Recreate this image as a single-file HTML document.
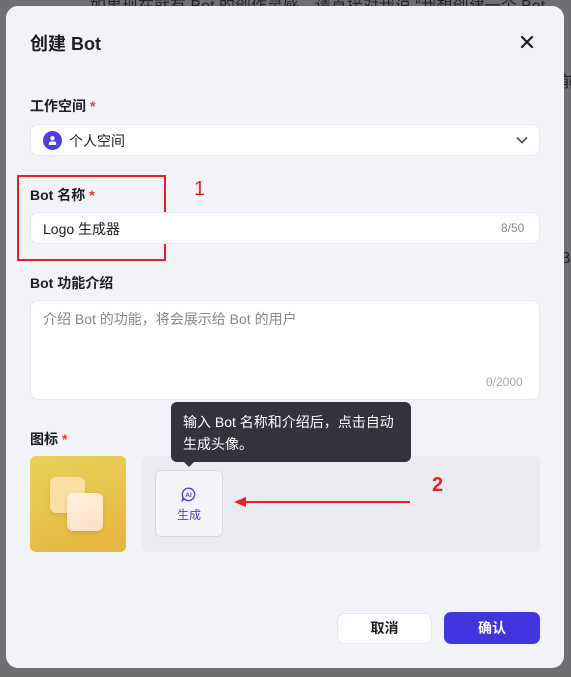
<!DOCTYPE html>
<html><head><meta charset="utf-8"><style>
*{box-sizing:border-box;margin:0;padding:0}
body{width:571px;height:677px;overflow:hidden;background:#6f6f72;font-family:"Liberation Sans","Noto Sans CJK SC",sans-serif;position:relative;color:#1d1c23}
.abs{position:absolute}
.modal{position:absolute;left:6px;top:6px;width:558px;height:662px;background:#f1f3f8;border-radius:12px}
.lbl{position:absolute;font-size:14px;font-weight:bold;color:#1d1c23}
.lbl i{color:#f02e2e;font-style:normal;margin-left:4px}
.inp{position:absolute;left:30px;width:510px;background:#fff;border:1px solid #e6e7ec;border-radius:8px}
</style></head><body>
<div class="abs" style="left:90px;top:-8px;font-size:16px;color:#222">如果现在就有 Bot 的创作灵感，请直接对我说 “我想创建一个 Bot</div>
<div class="abs" style="left:560px;top:68px;font-size:16px;color:#222">前</div>
<div class="abs" style="left:560px;top:250px;font-size:16px;color:#222">Bo</div>
<div class="modal"></div>
<div class="abs" style="left:30px;top:30px;font-size:18px;font-weight:bold">创建 Bot</div>
<svg class="abs" style="left:520px;top:35px" width="14" height="14" viewBox="0 0 14 14"><path d="M2 2L12 12M12 2L2 12" stroke="#1d1c23" stroke-width="2.2" stroke-linecap="round"/></svg>
<div class="lbl" style="left:30px;top:96px">工作空间<i>*</i></div>
<div class="inp" style="top:124px;height:32px"></div>
<div class="abs" style="left:43px;top:131px;width:19px;height:19px;border-radius:50%;background:#4d3ee0"></div>
<svg class="abs" style="left:47px;top:135px" width="11" height="11" viewBox="0 0 11 11"><circle cx="5.5" cy="3.3" r="2.2" fill="#fff"/><path d="M1.8 10v-1.5a2 2 0 0 1 2-2h3.4a2 2 0 0 1 2 2V10z" fill="#fff"/></svg>
<div class="abs" style="left:69px;top:131px;font-size:14px">个人空间</div>
<svg class="abs" style="left:516px;top:135px" width="12" height="10" viewBox="0 0 12 10"><path d="M1.5 3l4.5 4.5L10.5 3" stroke="#555" stroke-width="1.8" fill="none" stroke-linecap="round"/></svg>
<div class="abs" style="left:17px;top:175px;width:149px;height:86px;border:2px solid #f21d1d"></div>
<div class="abs" style="left:194px;top:178px;font-size:20px;color:#f21d1d">1</div>
<div class="lbl" style="left:30px;top:185px">Bot 名称<i>*</i></div>
<div class="inp" style="top:212px;height:32px"></div>
<div class="abs" style="left:43px;top:219px;font-size:14px">Logo 生成器</div>
<div class="abs" style="left:501px;top:221px;font-size:12px;color:#888">8/50</div>
<div class="lbl" style="left:30px;top:273px">Bot 功能介绍</div>
<div class="inp" style="top:300px;height:100px"></div>
<div class="abs" style="left:43px;top:309px;font-size:14px;color:#888">介绍 Bot 的功能，将会展示给 Bot 的用户</div>
<div class="abs" style="left:486px;top:375px;font-size:12px;color:#aaa">0/2000</div>
<div class="lbl" style="left:30px;top:429px">图标<i>*</i></div>
<div class="abs" style="left:30px;top:456px;width:96px;height:96px;border-radius:6px;background:linear-gradient(160deg,#e9d25c,#e6b53e)"></div>
<div class="abs" style="left:50px;top:477px;width:35px;height:36px;border-radius:6px;background:#f7dfa5;box-shadow:0 2px 4px rgba(180,130,0,.3)"></div>
<div class="abs" style="left:67px;top:493px;width:36px;height:38px;border-radius:6px;background:linear-gradient(160deg,#fff1e2,#fde0c4);box-shadow:0 2px 4px rgba(180,120,0,.35)"></div>
<div class="abs" style="left:142px;top:456px;width:398px;height:96px;border-radius:6px;background:#eaeaf0"></div>
<div class="abs" style="left:155px;top:470px;width:68px;height:67px;border-radius:6px;background:#f4f4f8;border:1px solid #d8d8de"></div>
<svg class="abs" style="left:181px;top:487px" width="15" height="15" viewBox="0 0 15 15"><path d="M7.5 1.2a6.2 6.2 0 1 1-4.4 10.6L1.5 13.5l.6-3.2A6.2 6.2 0 0 1 7.5 1.2z" stroke="#4d3ee0" stroke-width="1.4" fill="none"/><text x="7.5" y="10" font-size="6.5" font-weight="bold" fill="#4d3ee0" text-anchor="middle" font-family="Liberation Sans">AI</text></svg>
<div class="abs" style="left:177px;top:506px;font-size:12px;color:#4d3ee0">生成</div>
<div class="abs" style="left:171px;top:402px;width:240px;height:60px;border-radius:6px;background:#33323d"></div>
<div class="abs" style="left:183px;top:466px;width:0;height:0;border:6px solid transparent;border-top:6px solid #33323d;margin-top:-5px"></div>
<div class="abs" style="left:183px;top:411px;width:220px;font-size:14px;line-height:22px;color:#fff">输入 Bot 名称和介绍后，点击自动生成头像。</div>
<div class="abs" style="left:432px;top:474px;font-size:20px;color:#f21d1d;font-weight:bold">2</div>
<div class="abs" style="left:240px;top:501px;width:170px;height:2px;background:#f21d1d"></div>
<svg class="abs" style="left:234px;top:496px" width="12" height="12" viewBox="0 0 12 12"><path d="M0 6L12 1V11z" fill="#f21d1d"/></svg>
<div class="abs" style="left:337px;top:613px;width:95px;height:31px;border-radius:8px;background:#fff;border:1px solid #e6e7ec;font-size:14px;font-weight:bold;text-align:center;line-height:29px">取消</div>
<div class="abs" style="left:444px;top:612px;width:96px;height:32px;border-radius:7px;background:#4035df;color:#fff;font-size:14px;font-weight:bold;text-align:center;line-height:32px">确认</div>
</body></html>
